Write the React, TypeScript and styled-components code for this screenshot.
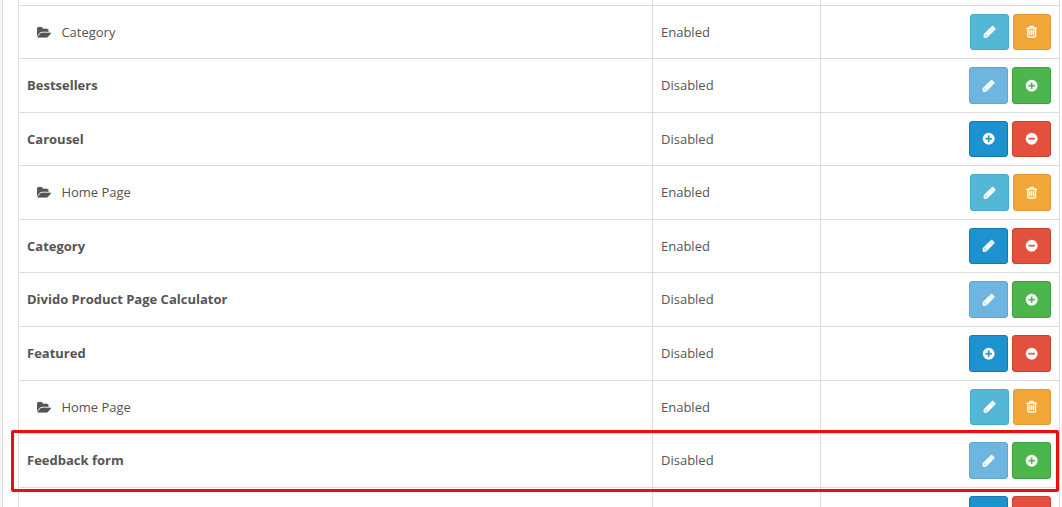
import React from "react";
import styled, { createGlobalStyle } from "styled-components";

const GlobalStyle = createGlobalStyle`
  * { box-sizing: border-box; }
  body {
    margin: 0;
    background: #fff;
    color: #555;
    font-family: "Open Sans", "Liberation Sans", sans-serif;
    font-size: 13px;
    line-height: 20px;
    overflow: hidden;
  }
`;

const tones = {
  info: ["#54b7d5", "#45a9c8"],
  warning: ["#f3a638", "#e29a33"],
  muted: ["#6eb5e0", "#62a5cd"],
  success: ["#4cb64c", "#409f40"],
  primary: ["#1e91cf", "#1979ad"],
  danger: ["#e3503e", "#c74332"],
};
type Tone = keyof typeof tones;

const icons = {
  pencil:
    "M491 1536l91-91-235-235-91 91v107h128v128h107zm523-928q0-22-22-22-10 0-17 7l-542 542q-7 7-7 17 0 22 22 22 10 0 17-7l542-542q7-7 7-17zm-54-192l416 416-832 832h-416v-416zm683 96q0 53-37 90l-166 166-416-416 166-165q36-38 90-38 53 0 91 38l235 234q37 39 37 91z",
  trash:
    "M704 736v576q0 14-9 23t-23 9h-64q-14 0-23-9t-9-23v-576q0-14 9-23t23-9h64q14 0 23 9t9 23zm256 0v576q0 14-9 23t-23 9h-64q-14 0-23-9t-9-23v-576q0-14 9-23t23-9h64q14 0 23 9t9 23zm256 0v576q0 14-9 23t-23 9h-64q-14 0-23-9t-9-23v-576q0-14 9-23t23-9h64q14 0 23 9t9 23zm128 724v-948h-896v948q0 22 7 40.5t14.5 27 10.5 8.5h832q3 0 10.5-8.5t14.5-27 7-40.5zm-672-1076h448l-48-117q-7-9-17-11h-317q-10 2-17 11zm928 32v64q0 14-9 23t-23 9h-96v948q0 83-47 143.5t-113 60.5h-832q-66 0-113-58.5t-47-141.5v-952h-96q-14 0-23-9t-9-23v-64q0-14 9-23t23-9h309l70-167q15-37 54-63t79-26h320q40 0 79 26t54 63l70 167h309q14 0 23 9t9 23z",
  plus:
    "M1344 960v-128q0-26-19-45t-45-19h-256v-256q0-26-19-45t-45-19h-128q-26 0-45 19t-19 45v256h-256q-26 0-45 19t-19 45v128q0 26 19 45t45 19h256v256q0 26 19 45t45 19h128q26 0 45-19t19-45v-256h256q26 0 45-19t19-45zm320-64q0 209-103 385.5t-279.5 279.5-385.5 103-385.5-103-279.5-279.5-103-385.5 103-385.5 279.5-279.5 385.5-103 385.5 103 279.5 279.5 103 385.5z",
  minus:
    "M1344 960v-128q0-26-19-45t-45-19h-768q-26 0-45 19t-19 45v128q0 26 19 45t45 19h768q26 0 45-19t19-45zm320-64q0 209-103 385.5t-279.5 279.5-385.5 103-385.5-103-279.5-279.5-103-385.5 103-385.5 279.5-279.5 385.5-103 385.5 103 279.5 279.5 103 385.5z",
  folder:
    "M1879 952q0 31-31 66l-336 396q-43 51-120.5 86.5t-143.5 35.5h-1088q-34 0-60.5-13t-26.5-43q0-31 31-66l336-396q43-51 120.5-86.5t143.5-35.5h1088q34 0 60.5 13t26.5 43zm-343-344v160h-832q-94 0-197 47.5t-164 119.5l-337 396-5 6q0-4-.5-12.5t-.5-12.5v-960q0-92 66-158t158-66h320q92 0 158 66t66 158v32h544q92 0 158 66t66 158z",
};
type IconName = keyof typeof icons;

const weights: Record<IconName, number> = { pencil: 80, trash: 60, plus: 40, minus: 40, folder: 20 };

const Page = styled.div`
  position: relative;
  display: flex;
  width: 1062px;
  height: 507px;
  overflow: hidden;
`;

const Gutter = styled.div`
  width: 3px;
  flex: none;
  margin-right: 15px;
  background: #f5f5f5;
  border-right: 1px solid #dcdcdc;
`;

const Table = styled.div`
  width: 1042px;
  flex: none;
  border-left: 1px solid #ddd;
  border-right: 1px solid #ddd;
`;

const Row = styled.div<{ $height: number }>`
  display: grid;
  grid-template-columns: 633px 168px 1fr;
  height: ${(p) => p.$height}px;
  border-bottom: 1px solid #ddd;
`;

const Cell = styled.div`
  display: flex;
  align-items: flex-start;
  padding: 16px 8px 0;
  & + & {
    border-left: 1px solid #ddd;
  }
`;

const SpacerCell = styled(Cell)`
  padding-top: 0;
`;

const NameCell = styled(Cell)<{ $child?: boolean }>`
  font-weight: ${(p) => (p.$child ? 400 : 700)};
  padding-left: ${(p) => (p.$child ? 18 : 8)}px;
  gap: 10px;
  & > svg {
    margin-top: 4px;
  }
`;

const ActionCell = styled(Cell)`
  justify-content: flex-end;
  padding-top: 8px;
  gap: 4px;
`;

const Button = styled.button<{ $tone: Tone; $width: number; $height: number }>`
  display: flex;
  align-items: center;
  justify-content: center;
  flex: none;
  width: ${(p) => p.$width}px;
  height: ${(p) => p.$height}px;
  padding: 0;
  color: #fff;
  background: ${(p) => tones[p.$tone][0]};
  border: 1px solid ${(p) => tones[p.$tone][1]};
  border-radius: 3px;
`;

const Glyph = styled.svg`
  display: block;
  flex: none;
  height: 13.4px;
  fill: currentColor;
  stroke: currentColor;
`;

const Highlight = styled.div`
  position: absolute;
  left: 11px;
  top: 430px;
  width: 1048px;
  height: 62px;
  border: 3px solid #e90f10;
  border-radius: 2px;
`;

const Icon = ({ name }: { name: IconName }) => {
  const wide = name === "folder";
  return (
    <Glyph
      viewBox={wide ? "0 0 1920 1792" : "0 0 1792 1792"}
      width={wide ? 14.4 : 13.4}
      strokeWidth={weights[name]}
    >
      <path d={icons[name]} />
    </Glyph>
  );
};

type Action = [IconName, Tone];
const child: Action[] = [["pencil", "info"], ["trash", "warning"]];
const install: Action[] = [["pencil", "muted"], ["plus", "success"]];
const add: Action[] = [["plus", "primary"], ["minus", "danger"]];
const edit: Action[] = [["pencil", "primary"], ["minus", "danger"]];

interface Item {
  name: string;
  status: string;
  actions: Action[];
  height: number;
  button: number;
  child?: boolean;
}

const items: Item[] = [
  { name: "Category", status: "Enabled", actions: child, height: 53, button: 36, child: true },
  { name: "Bestsellers", status: "Disabled", actions: install, height: 54, button: 37 },
  { name: "Carousel", status: "Disabled", actions: add, height: 53, button: 36 },
  { name: "Home Page", status: "Enabled", actions: child, height: 54, button: 37, child: true },
  { name: "Category", status: "Enabled", actions: edit, height: 53, button: 36 },
  { name: "Divido Product Page Calculator", status: "Disabled", actions: install, height: 54, button: 37 },
  { name: "Featured", status: "Disabled", actions: add, height: 54, button: 37 },
  { name: "Home Page", status: "Enabled", actions: child, height: 53, button: 36, child: true },
  { name: "Feedback form", status: "Disabled", actions: install, height: 54, button: 37 },
  { name: "", status: "", actions: add, height: 54, button: 37 },
];

export default function App() {
  return (
    <Page>
      <GlobalStyle />
      <Gutter />
      <Table>
        <Row $height={6}>
          <SpacerCell />
          <SpacerCell />
          <SpacerCell />
        </Row>
        {items.map((item, i) => (
          <Row key={i} $height={item.height}>
            <NameCell $child={item.child}>
              {item.child && <Icon name="folder" />}
              {item.name}
            </NameCell>
            <Cell>{item.status}</Cell>
            <ActionCell>
              {item.actions.map(([icon, tone], n) => (
                <Button
                  key={icon}
                  $tone={tone}
                  $width={item.child && n === 1 ? 38 : 39}
                  $height={item.button}
                >
                  <Icon name={icon} />
                </Button>
              ))}
            </ActionCell>
          </Row>
        ))}
      </Table>
      <Highlight />
    </Page>
  );
}
